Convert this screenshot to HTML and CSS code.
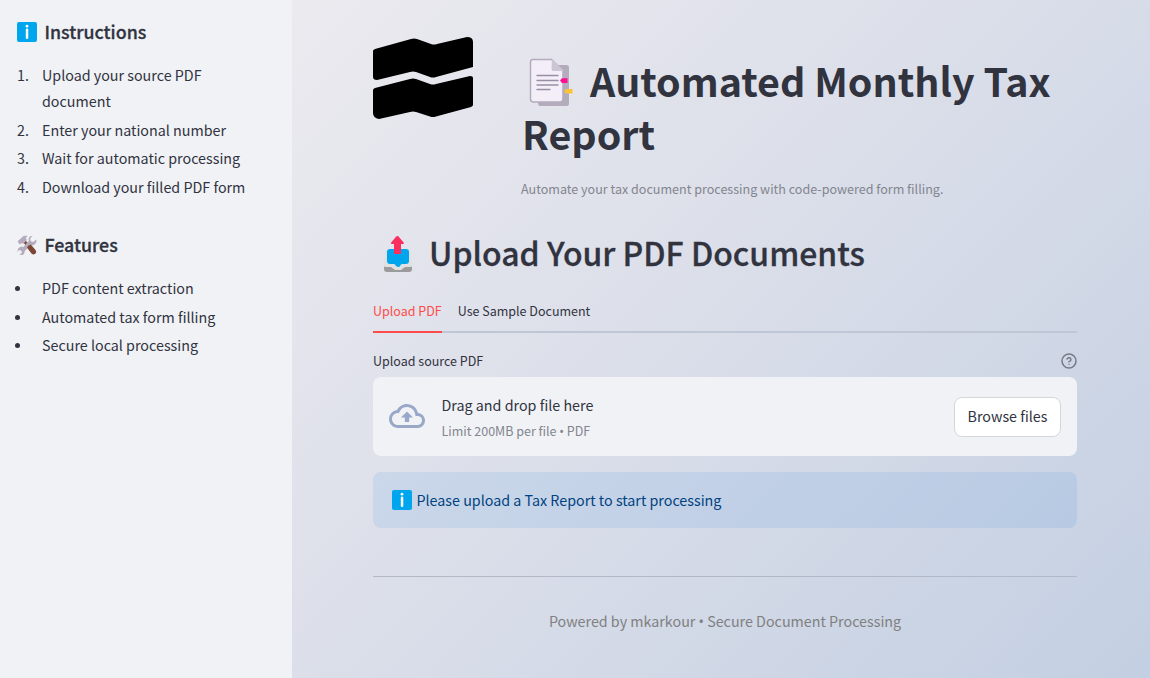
FILE: index.html
```html
<!DOCTYPE html>
<html lang="en">
<head>
<meta charset="utf-8">
<title>Automated Monthly Tax Report</title>
<link rel="stylesheet" href="styles.css">
</head>
<body>
<svg width="0" height="0" class="defs">
  <symbol id="info" viewBox="0 0 20 20"><rect width="20" height="20" rx="2" fill="#00a6ed"/><circle cx="10" cy="4.200" r="1.400" fill="#fff"/><rect x="8.800" y="6.500" width="2.500" height="10.500" rx="1.200" fill="#fff"/></symbol>
</svg>
<div class="app">
  <aside class="sidebar">
    <h3 class="side-title"><svg class="emoji"><use href="#info"/></svg><span>Instructions</span></h3>
    <ol class="list numbered">
      <li>Upload your source PDF document</li>
      <li>Enter your national number</li>
      <li>Wait for automatic processing</li>
      <li>Download your filled PDF form</li>
    </ol>
    <h3 class="side-title second">
      <svg class="emoji" viewBox="0 0 32 32"><path d="M9 10l3-3 17 18q2 3-1 5t-5-1z" fill="#7d4533"/><path d="M1 10L11 1h6l-3 4 2 3-6 6-3-1-3 2z" fill="#b4acbc"/><path d="M25 1l-4 5 1 4 4 1 5-4q1 7-4 9-3 1-5 0L12 26q1 4-3 6-3 1-5 0l4-4-1-3-4-1-2 3q-1-6 4-8 2-1 5 0L19 9q-2-7 6-8z" fill="#b4acbc"/><path d="M18 17l4-2 7 8q3 3 1 6t-6 1l-8-10z" fill="#7d4533"/></svg>
      <span>Features</span>
    </h3>
    <ul class="list bulleted">
      <li>PDF content extraction</li>
      <li>Automated tax form filling</li>
      <li>Secure local processing</li>
    </ul>
  </aside>
  <main class="main">
    <header class="header">
      <svg class="logo" viewBox="0 0 100 82"><path d="M2 12L38 2q3-1 6 0L58 7q3 1 6 0L94 0q6 0 6 5v25L63 40q-3 1-6 0L43 35q-3-1-6 0L4 43q-4 0-4-3V14q0-1 2-2zM2 51L37 42q3-1 6 0L57 47q3 1 6 0L97 39q3 0 3 2v27q0 1-2 2L63 79.500q-3 1-6 0L43 75q-3-1-6 0L6 82q-6-1-6-6V53q0-1 2-2z"/></svg>
      <div class="heading">
        <h1 class="title"><svg class="doc" viewBox="0 0 44 50"><rect x="9" y="7" width="31" height="41" rx="2.500" fill="#b4acbc"/><path d="M3.500 1.500h19L34 13v28q0 3-3 3H4.500q-3 0-3-3V4.500q0-3 2-3z" fill="#f3eef8" stroke="#b4acbc" stroke-width="1.500"/><path d="M23 1l12 12H24q-1.500 0-1.500-2z" fill="#cdc4d6"/><path d="M8 17.500h21M8 22.500h21M8 27h21M8 31.500h13" stroke="#998ea4" stroke-width="1.300" stroke-linecap="round"/><path d="M31 22.500l2-2.200h5.500v4.600H33z" fill="#ff0f91"/><path d="M35 33.200l2-2.200h6.500v4.600H37z" fill="#fcc335"/></svg>Automated Monthly Tax Report</h1>
        <p class="caption">Automate your tax document processing with code-powered form filling.</p>
      </div>
    </header>
    <h2 class="subtitle"><svg class="outbox" viewBox="0 0 30 37"><path d="M1 25v8q0 3 3 3h22q3 0 3-3v-8z" fill="#9b9b9b"/><path d="M5 13h20q2 0 2.500 3L29 25v5q0 1-2 1h-5l-4 3h-6l-4-3H3q-2 0-2-1v-5l1.500-9q.5-3 2.500-3z" fill="#e1e1e1"/><path d="M7 13h16q3 0 3 3v9q0 3-3 3h-4q-1 0-2 2t-4 0q-1-2-2-2H7q-3 0-3-3v-9q0-3 3-3z" fill="#00a6ed"/><path d="M14.500 0q.8 0 1.300.7l5 6q.5 1-.8 1.300h-2v10h-7V8H9q-1.500 0-1-1.300l5-6q.5-.7 1.500-.7z" fill="#f92f60"/></svg><span>Upload Your PDF Documents</span></h2>
    <nav class="tabs"><a class="tab active">Upload PDF</a><a class="tab">Use Sample Document</a></nav>
    <div class="field-label"><span>Upload source PDF</span>
      <svg class="help" viewBox="0 0 24 24"><circle cx="12" cy="12" r="10.500"/><path d="M9.090 9a3 3 0 0 1 5.830 1c0 2-3 3-3 3M12 17h.01"/></svg>
    </div>
    <section class="dropzone">
      <svg class="cloud" viewBox="0 0 24 24"><path d="M19.350 10.040A7.490 7.490 0 0 0 12 4C9.110 4 6.600 5.640 5.350 8.040A5.994 5.994 0 0 0 0 14c0 3.310 2.690 6 6 6h13c2.760 0 5-2.240 5-5 0-2.640-2.050-4.780-4.650-4.960zM19 18H6c-2.210 0-4-1.790-4-4 0-2.050 1.530-3.760 3.560-3.970l1.070-.11.500-.950A5.469 5.469 0 0 1 12 6c2.620 0 4.880 1.860 5.390 4.430l.3 1.500 1.530.11A2.980 2.980 0 0 1 22 15c0 1.650-1.350 3-3 3zM8 13h2.550v3h2.900v-3H16l-4-4z"/></svg>
      <div class="drop-text"><div class="drop-main">Drag and drop file here</div><div class="drop-sub">Limit 200MB per file <span class="dot">•</span> PDF</div></div>
      <button class="browse">Browse files</button>
    </section>
    <div class="alert"><svg class="emoji"><use href="#info"/></svg><span>Please upload a Tax Report to start processing</span></div>
    <hr class="rule">
    <footer class="footer">Powered by mkarkour <span class="dot">•</span> Secure Document Processing</footer>
  </main>
</div>
</body>
</html>
```
FILE: styles.css
```css
* { box-sizing: border-box; margin: 0; padding: 0; }
body { font-family: "Noto Sans CJK SC", "Noto Sans", sans-serif; font-size: 14.300px; color: #31333f; }
.defs { display: block; }
.app { display: flex; width: 1150px; height: 678px; overflow: hidden; background: linear-gradient(135deg, #f2eff2 0%, #dde0ea 50%, #c3cfe2 100%); }
.sidebar { width: 292px; background: #f0f2f6; padding: 19px 16px; flex: none; }
.side-title { display: flex; align-items: center; gap: 8px; height: 26px; padding-left: .5px; font-size: 17.800px; font-weight: 500; line-height: 26px; }
.side-title span { padding-bottom: 2px; -webkit-text-stroke: .3px; }
.side-title.second { margin-top: 32px; }
.emoji { width: 20px; height: 20px; flex: none; }
.list { list-style: none; margin-top: 17px; line-height: 26px; counter-reset: n; }
.list li { position: relative; padding-left: 26px; margin-bottom: 2.600px; padding-right: 40px; }
.numbered li::before { counter-increment: n; content: counter(n) "."; position: absolute; left: 1px; }
.numbered li:nth-child(n+2) { padding-right: 0; }
.bulleted { margin-top: 17.400px; }
.bulleted li::before { content: ""; position: absolute; left: -1px; top: 11px; width: 5px; height: 5px; border-radius: 50%; background: #31333f; }
.dot { font-family: "Noto Sans", sans-serif; line-height: 1; }
.main { width: 785px; padding: 37px 0 0 81px; }
.header { display: flex; height: 164px; }
.logo { width: 100px; height: 82px; flex: none; }
.heading { margin-left: 49px; padding-top: 16px; width: 555px; flex: none; }
.title { height: 106px; font-size: 39.400px; line-height: 53px; font-weight: 700; }
.doc { width: 44px; height: 50px; margin: -10px 17.500px -10px 6.500px; vertical-align: -1px; }
.caption { margin: 19px 0 0 -1px; font-size: 12.550px; line-height: 22px; color: #83858f; }
.subtitle { display: flex; align-items: center; height: 44px; margin-top: 31px; padding-left: 9.500px; gap: 16.500px; font-size: 31.950px; line-height: 44px; font-weight: 500; }
.subtitle span { padding-bottom: 4px; -webkit-text-stroke: .3px; }
.outbox { width: 30px; height: 37px; }
.tabs { display: flex; gap: 16px; height: 42px; margin-top: 15px; border-bottom: 2px solid #bfc7d6; font-size: 12.500px; line-height: 40px; }
.tab { height: 42px; }
.tab.active { color: #ff4b4b; border-bottom: 2px solid #ff4b4b; }
.field-label { display: flex; justify-content: space-between; align-items: center; height: 24px; margin-top: 16px; font-size: 12.500px; }
.field-label span { padding-bottom: 2px; }
.help { width: 16px; height: 16px; fill: none; stroke: #747986; stroke-width: 2.200; stroke-linecap: round; stroke-linejoin: round; }
.dropzone { display: flex; align-items: center; height: 79px; margin-top: 4px; padding: 0 16px; border-radius: 8px; background: #f0f2f6; }
.cloud { width: 36px; height: 36px; fill: #98a8c8; margin-top: -1px; }
.drop-text { margin-left: 16.500px; margin-top: 1px; flex: 1; }
.drop-main { line-height: 26px; }
.drop-sub { font-size: 12.500px; line-height: 25px; color: #83858f; }
.browse { width: 107px; height: 40px; border: 1px solid #d4d6db; border-radius: 8px; background: #fff; color: #31333f; font: inherit; line-height: 36px; padding-bottom: 2px; }
.alert { display: flex; align-items: center; gap: 4.500px; height: 56px; margin-top: 16px; padding-left: 19px; border-radius: 8px; background: rgba(28,131,225,.1); color: #004280; }
.alert span { padding-bottom: 2px; }
.rule { border: 0; border-top: 1px solid #b2b8c6; margin-top: 48px; }
.footer { margin-top: 31px; line-height: 26px; text-align: center; color: #808080; }
```
